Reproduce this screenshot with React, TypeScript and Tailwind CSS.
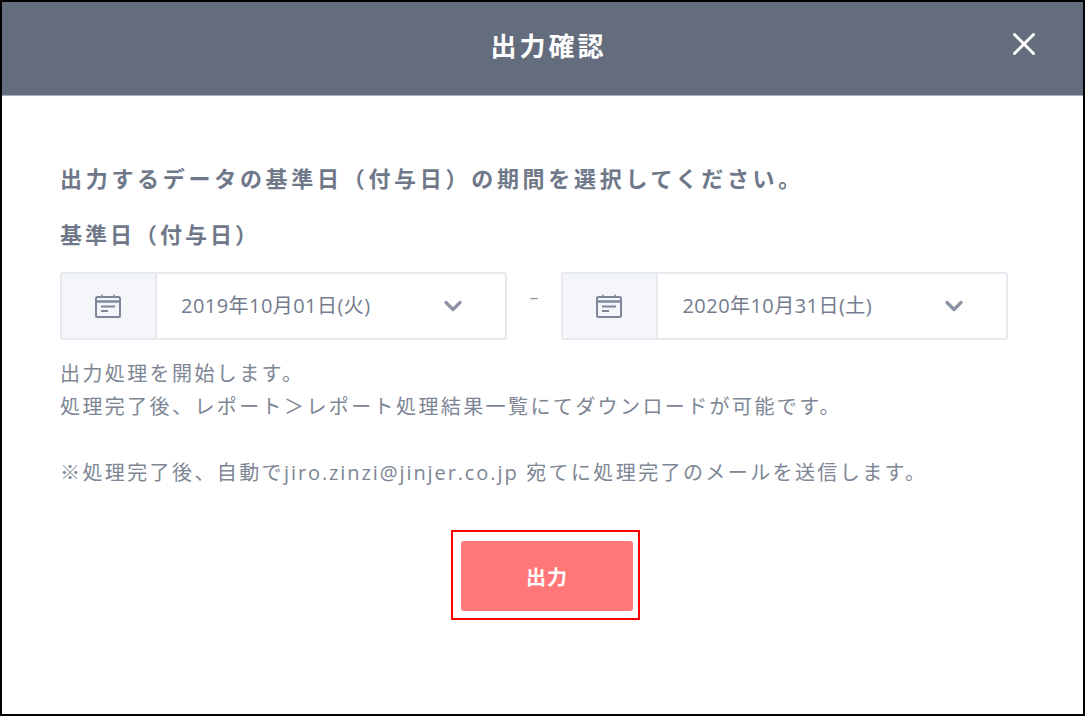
import { X, ChevronDown } from "lucide-react";

const fontFamily = "font-['Open_Sans','Noto_Sans_CJK_JP',sans-serif]";

function CalendarIcon() {
  return (
    <svg width="28" height="26" viewBox="0 0 28 26" fill="none" stroke="#7d8799" strokeWidth="2">
      <rect x="2" y="4" width="24" height="20" rx="1.5" />
      <path d="M2 8.5h24" strokeWidth="2.4" />
      <path d="M8 1.5v3M20 1.5v3" strokeWidth="1.5" />
      <path d="M7 13.5h14M7 18h7" strokeWidth="1.8" />
    </svg>
  );
}

function DateSelect({ value }: { value: string }) {
  return (
    <div className="flex h-[68px] w-[447px] overflow-hidden rounded-[3px] border-2 border-[#e6e9ee] bg-white">
      <div className="flex w-[95px] items-center justify-center border-r-2 border-[#e6e9ee] bg-[#f5f6fa] pr-[2px]">
        <CalendarIcon />
      </div>
      <div className="flex flex-1 items-center justify-between pl-[24px] pr-[38px]">
        <span className="text-[20px] tracking-[0.45px] text-[#737c8e]">{value}</span>
        <ChevronDown size={28} strokeWidth={2.8} className="text-[#8a93a3]" />
      </div>
    </div>
  );
}

export default function App() {
  return (
    <div className={`flex h-[716px] w-[1085px] flex-col border-2 border-black bg-white ${fontFamily}`}>
      <header className="relative flex h-[94px] shrink-0 items-center justify-center border-b border-[#a9b0bd] bg-[#636d7e] pb-[5px] pl-[12px]">
        <h1 className="text-[26px] font-bold tracking-[3px] text-white">出力確認</h1>
        <X size={38} strokeWidth={1.8} className="absolute right-[40px] top-[23px] text-white" />
      </header>

      <main className="flex flex-1 flex-col pl-[58px] pr-[75px] pt-[67px] text-[#6b7588]">
        <p className="text-[22px] font-bold leading-[30px] tracking-[3.7px] text-[#6f7889]">
          出力するデータの基準日（付与日）の期間を選択してください。
        </p>
        <p className="mt-[26px] text-[22px] font-bold leading-[30px] tracking-[3px] text-[#6f7889]">
          基準日（付与日）
        </p>

        <div className="mt-[23px] flex items-start">
          <DateSelect value="2019年10月01日(火)" />
          <span className="w-[55px] pt-[12px] text-center text-[18px] text-[#8a93a3]">–</span>
          <DateSelect value="2020年10月31日(土)" />
        </div>

        <div className="mt-[17px] text-[20px] leading-[33px] tracking-[2.4px] text-[#7d8694]">
          <p>出力処理を開始します。</p>
          <p>処理完了後、レポート＞レポート処理結果一覧にてダウンロードが可能です。</p>
          <p className="mt-[33px]">
            ※処理完了後、自動で<span className="tracking-[1.9px]">jiro.zinzi@jinjer.co.jp</span> 宛てに処理完了のメールを送信します。
          </p>
        </div>

        <div className="mt-[41px] flex justify-center pl-[23px]">
          <div className="border-2 border-[#ff0000] pb-[7px] pl-[8px] pr-[5px] pt-[9px]">
            <button className="flex h-[70px] w-[172px] items-center justify-center rounded-[3px] bg-[#ff7777] pt-[3px] text-[20px] font-bold tracking-[1px] text-white">
              出力
            </button>
          </div>
        </div>
      </main>
    </div>
  );
}
